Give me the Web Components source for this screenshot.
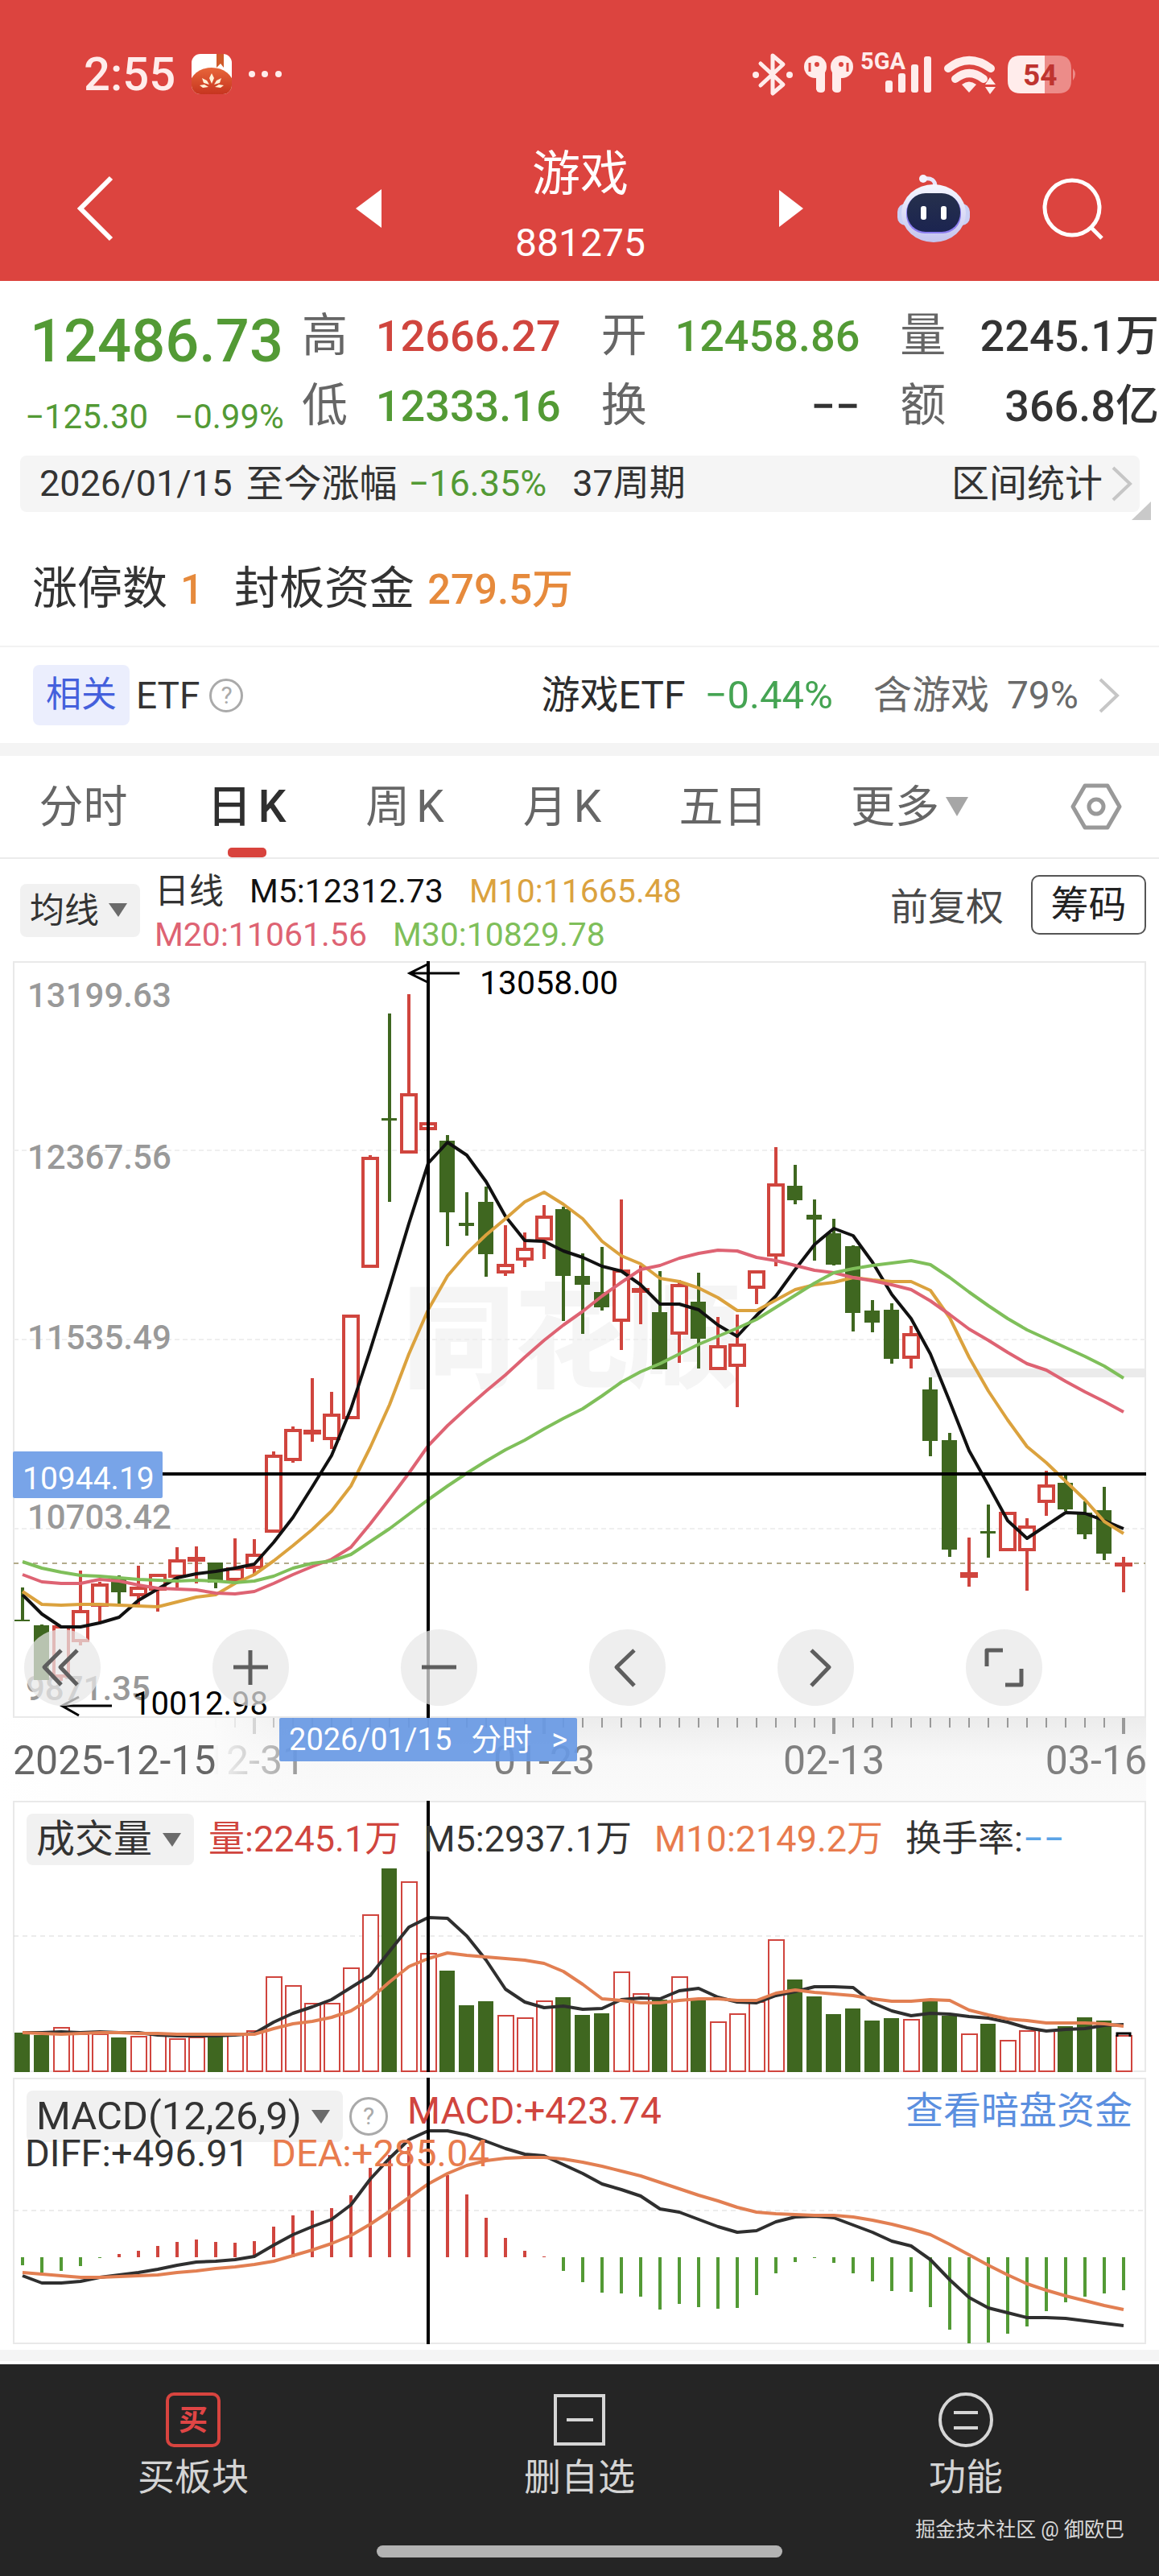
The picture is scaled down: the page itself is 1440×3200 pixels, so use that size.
<!DOCTYPE html>
<html lang="zh-CN">
<head>
<meta charset="utf-8">
<meta name="viewport" content="width=device-width, initial-scale=1">
<title>游戏 881275</title>
<style>
  body {
    margin: 0;
    background: #fff;
    color: #333;
    font-family: Roboto, "Noto Sans CJK SC", sans-serif;
    --up: #d0453e;
    --down: #539a35;
    --orange: #e68a3c;
  }
</style>
</head>
<body>
<status-bar time="2:55"></status-bar>
<stock-header name="游戏" code="881275"></stock-header>
<main>
  <quote-panel></quote-panel>
  <range-bar></range-bar>
  <limit-row></limit-row>
  <etf-row></etf-row>
  <period-tabs></period-tabs>
  <ma-bar></ma-bar>
  <kline-chart></kline-chart>
  <date-ruler></date-ruler>
  <volume-chart></volume-chart>
  <macd-chart></macd-chart>
</main>
<trade-nav>
  <trade-item label="买板块">
    <svg width="68" height="68" viewBox="0 0 68 68"><rect x="2" y="2" width="64" height="64" rx="8" fill="none" stroke="#d8443f" stroke-width="4"/><text x="34" y="47" text-anchor="middle" font-size="36" font-weight="700" fill="#e04545">买</text></svg>
  </trade-item>
  <trade-item label="删自选">
    <svg width="68" height="68" viewBox="0 0 68 68"><path d="M4 4h60v60H4zM18 34h33" fill="none" stroke="#d6d6d6" stroke-width="4"/></svg>
  </trade-item>
  <trade-item label="功能">
    <svg width="68" height="68" viewBox="0 0 68 68"><circle cx="34" cy="34" r="32" fill="none" stroke="#d6d6d6" stroke-width="4"/><path d="M19 25h30M19 44h30" stroke="#d6d6d6" stroke-width="4"/></svg>
  </trade-item>
</trade-nav>

<script>
const UP = '#d0453e';
const DOWN = '#3f6720';

class BaseElement extends HTMLElement {
  constructor() {
    super();
    this.attachShadow({ mode: 'open' });
  }

  connectedCallback() {
    this.shadowRoot.innerHTML = `
      <style>
        :host { display: block; }
        * { box-sizing: border-box; }
        button, select { font: inherit; color: inherit; background: none; border: 0; padding: 0; margin: 0; }
        a { color: inherit; text-decoration: none; }
        svg { display: block; flex: none; overflow: visible; }
      </style>
      ${this.render()}
    `;
  }
}

// Candles share one horizontal scale in all three charts
const xAt = i => 28 + i * 24;
const points = values => values.map((y, i) => `${xAt(i)},${y}`).join(' ');
const polyline = (values, color, width = 3) =>
  `<polyline points="${points(values)}" fill="none" stroke="${color}" stroke-width="${width}" stroke-linejoin="round"/>`;

class StatusBar extends BaseElement {
  render() {
    return `
      <style>
        :host { background: #dc443f; color: #ffeceb; }
        .bar { display: flex; align-items: center; height: 134px; padding: 50px 100px 0 104px; }
        time { font-size: 58px; font-weight: 500; line-height: 84px; margin-right: 20px; }
        .app { margin-right: 20px; }
        .right { margin-left: auto; }
      </style>
      <div class="bar">
        <time>${this.getAttribute('time')}</time>
        <svg class="app" width="50" height="50" viewBox="0 0 50 50">
          <defs><clipPath id="c"><rect width="50" height="50" rx="11"/></clipPath>
          <linearGradient id="g" x1="0" y1="0" x2="0" y2="1"><stop offset="0" stop-color="#e8663a"/><stop offset="1" stop-color="#bd2718"/></linearGradient></defs>
          <g clip-path="url(#c)">
            <rect width="50" height="50" fill="#fff"/>
            <path d="M31 0h9v17l-4-5-5 5z" fill="#cf5a2a"/>
            <ellipse cx="25" cy="38" rx="27" ry="21" fill="url(#g)"/>
            <path d="M25 37l-3-7 3-6 3 6zM22 38l-7-2-2-6 6 3zM28 38l7-2 2-6-6 3zM21 41l-7 1-4-3 6-1zM29 41l7 1 4-3-6-1z" fill="#fff2d8"/>
          </g>
        </svg>
        <svg width="44" height="12" viewBox="0 0 44 12" fill="#ffeceb"><circle cx="5" cy="6" r="4"/><circle cx="21" cy="6" r="4"/><circle cx="38" cy="6" r="4"/></svg>
        <svg class="right" width="406" height="60" viewBox="934 61 406 60" fill="#ffeceb">
          <path d="M945 78l28 26-13 11V68l13 11-28 26" fill="none" stroke="#ffeceb" stroke-width="5" stroke-linejoin="round" stroke-linecap="round"/>
          <circle cx="939" cy="92" r="4"/><circle cx="981" cy="92" r="4"/>
          <ellipse cx="1013" cy="82" rx="14" ry="14"/><ellipse cx="1046" cy="82" rx="14" ry="14"/>
          <path d="M1014 80h11v30q0 4-5 4t-6-4zM1034 80h11v30q0 4-5 4t-6-4z"/>
          <path d="M1006 88V77M1053 88V77" stroke="#dc443f" stroke-width="3"/><circle cx="1015" cy="79" r="3" fill="#dc443f"/><circle cx="1045" cy="79" r="3" fill="#dc443f"/>
          <text x="1069" y="85" font-size="29" font-weight="700">5GA</text>
          <rect x="1100" y="99" width="9" height="15" rx="3"/><rect x="1116" y="90" width="9" height="24" rx="3"/><rect x="1132" y="79" width="9" height="35" rx="3"/><rect x="1148" y="69" width="9" height="45" rx="3"/>
          <path d="M1178 84q26-20 53 0M1187 97q17-14 35 0" fill="none" stroke="#ffeceb" stroke-width="10" stroke-linecap="round"/>
          <path d="M1195 104q9-7 18 0l-9 10z"/>
          <path d="M1224 104l6-9 7 9zM1224 107l6 9 7-9z"/>
          <path d="M1298 68h17q16 0 16 16v15q0 16-16 16h-17z" fill="#ec8c89"/>
          <path d="M1333 84q6 7 0 15z" fill="#ec8c89"/>
          <path d="M1298 68h-30q-16 0-16 16v15q0 16 16 16h30z"/>
          <text x="1271" y="105" font-size="37" font-weight="700" fill="#bf3430">54</text>
        </svg>
      </div>
    `;
  }
}

class StockHeader extends BaseElement {
  render() {
    return `
      <style>
        :host { background: #dc443f; color: #fff; }
        header { display: grid; grid-template-columns: 1fr 556px 1fr; align-items: center; height: 215px; padding: 34px 68px 0; }
        .back { margin-left: 24px; }
        .switch { display: flex; align-items: center; justify-content: space-between; }
        h1 { margin: 0; font-weight: 400; text-align: center; }
        .name { display: block; font-size: 60px; line-height: 86px; }
        .code { display: block; font-size: 48px; line-height: 84px; }
        .tools { display: flex; align-items: center; justify-content: flex-end; gap: 86px; }
      </style>
      <header>
        <a class="back" href="#back" aria-label="返回"><svg width="52" height="84" viewBox="0 0 52 84"><path d="M46 4L8 42l38 38" fill="none" stroke="#fff" stroke-width="6"/></svg></a>
        <div class="switch">
          <button aria-label="上一只"><svg width="32" height="48" viewBox="0 0 32 48"><path d="M32 0v48L0 24z" fill="#fff"/></svg></button>
          <h1><span class="name">${this.getAttribute('name')}</span><span class="code">${this.getAttribute('code')}</span></h1>
          <button aria-label="下一只"><svg width="30" height="46" viewBox="0 0 30 46"><path d="M0 0v46l30-23z" fill="#fff"/></svg></button>
        </div>
        <div class="tools">
          <button aria-label="智能助手">
            <svg width="92" height="86" viewBox="0 0 92 86">
              <defs><linearGradient id="r" x1="0" y1="0" x2="0" y2="1"><stop offset="0" stop-color="#f6f7ff"/><stop offset="1" stop-color="#c3c3ee"/></linearGradient>
              <linearGradient id="s" x1="0" y1="0" x2="0" y2="1"><stop offset="0" stop-color="#26304c"/><stop offset="1" stop-color="#1b2450"/></linearGradient></defs>
              <path d="M34 6q14-2 14 10" fill="none" stroke="#e9e6fa" stroke-width="5"/><circle cx="33" cy="6" r="5" fill="#f3f2ff"/>
              <rect x="1" y="37" width="90" height="27" rx="10" fill="#c9d0f5"/>
              <ellipse cx="46" cy="49" rx="40" ry="36" fill="url(#r)"/>
              <rect x="12" y="25" width="68" height="49" rx="23" fill="#8b7df0"/>
              <rect x="13" y="24" width="66" height="48" rx="23" fill="url(#s)"/>
              <rect x="30" y="40" width="7" height="17" rx="3" fill="#fff"/><rect x="55" y="40" width="7" height="17" rx="3" fill="#fff"/>
            </svg>
          </button>
          <button aria-label="搜索"><svg width="80" height="80" viewBox="0 0 80 80" fill="none" stroke="#fff" stroke-width="5"><circle cx="40" cy="39" r="34"/><path d="M64 64l13 13"/></svg></button>
        </div>
      </header>
    `;
  }
}

class QuotePanel extends BaseElement {
  render() {
    const cells = [
      ['高', '12666.27', 'up'], ['开', '12458.86', 'down'], ['量', '2245.1万', ''],
      ['低', '12333.16', 'down'], ['换', '−−', ''], ['额', '366.8亿', ''],
    ];
    return `
      <style>
        section { display: grid; grid-template-columns: 375px 1fr; height: 217px; padding-top: 21px; }
        .last { padding-left: 37px; color: var(--down); font-weight: 500; }
        .price { font-size: 74px; line-height: 108px; }
        .change { display: flex; gap: 32px; margin-left: -6px; font-size: 42px; line-height: 80px; font-weight: 400; }
        dl { display: grid; grid-template-columns: repeat(3, 1fr); column-gap: 50px; grid-auto-rows: 87px; margin: 0; }
        dl div { display: flex; justify-content: space-between; align-items: baseline; white-space: nowrap; }
        dt { font-size: 57px; color: #666; }
        dd { margin: 0; font-size: 54px; font-weight: 500; }
        .up { color: var(--up); }
        .down { color: var(--down); }
      </style>
      <section>
        <div class="last">
          <div class="price">12486.73</div>
          <div class="change"><span>−125.30</span><span>−0.99%</span></div>
        </div>
        <dl>${cells.map(([k, v, c]) => `<div><dt>${k}</dt><dd class="${c}">${v}</dd></div>`).join('')}</dl>
      </section>
    `;
  }
}

class RangeBar extends BaseElement {
  render() {
    return `
      <style>
        :host { position: relative; }
        .bar { display: flex; align-items: center; gap: 20px; height: 70px; margin: 0 24px 0 25px; padding: 0 8px 0 24px; background: #f5f5f5; border-radius: 8px; font-size: 45px; line-height: 70px; white-space: nowrap; }
        .text { font-size: 47px; margin: 0 -6px 0 -3px; }
        .pct { color: var(--down); margin-right: 12px; }
        a { display: flex; align-items: center; gap: 10px; margin-left: auto; font-size: 47px; }
        .corner { position: absolute; right: 10px; bottom: -10px; }
      </style>
      <div class="bar">
        <span>2026/01/15</span><span class="text">至今涨幅</span><span class="pct">−16.35%</span><span>37周期</span>
        <a href="#stats">区间统计<svg width="28" height="46" viewBox="0 0 28 46"><path d="M3 3l21 20L3 43" fill="none" stroke="#c6c6c6" stroke-width="4"/></svg></a>
      </div>
      <svg class="corner" width="24" height="23" viewBox="0 0 24 23"><path d="M24 0v23H0z" fill="#c9c9c9"/></svg>
    `;
  }
}

class LimitRow extends BaseElement {
  render() {
    return `
      <style>
        p { height: 168px; margin: 0; padding: 24px 40px 0; font-size: 56px; line-height: 142px; border-bottom: 2px solid #f2f2f2; }
        b { font-size: 51px; font-weight: 500; color: var(--orange); margin: 0 38px 0 16px; }
      </style>
      <p>涨停数<b>1</b>封板资金<b>279.5万</b></p>
    `;
  }
}

class HelpButton extends BaseElement {
  render() {
    return `
      <style>
        :host { display: inline-block; }
        button { display: grid; place-items: center; width: 1em; height: 1em; border: 3px solid #aaa; border-radius: 50%; color: #aaa; }
        span { font-size: 30px; line-height: 30px; }
      </style>
      <button aria-label="说明"><span>?</span></button>
    `;
  }
}

class EtfRow extends BaseElement {
  render() {
    return `
      <style>
        section { display: flex; align-items: center; height: 119px; padding: 0 48px 0 41px; font-size: 48px; line-height: 70px; white-space: nowrap; }
        .tag { padding: 0 16px; font-size: 44px; line-height: 75px; background: #ebeefd; color: #4460dc; border-radius: 8px; }
        .etf { margin: 0 12px 0 8px; font-size: 46px; }
        help-button { font-size: 42px; }
        a { display: flex; align-items: center; margin-left: auto; }
        .name { color: #2c2c2c; }
        .pct { font-size: 49px; color: #45a453; margin: 0 50px 0 24px; }
        .hold { display: flex; gap: 22px; color: #6a6a6a; margin-right: 24px; }
        .gap { height: 16px; background: #f4f4f4; }
      </style>
      <section>
        <span class="tag">相关</span><span class="etf">ETF</span><help-button></help-button>
        <a href="#etf"><span class="name">游戏ETF</span><span class="pct">−0.44%</span><span class="hold"><span>含游戏</span><span>79%</span></span>
          <svg width="28" height="46" viewBox="0 0 28 46"><path d="M3 3l21 20L3 43" fill="none" stroke="#c6c6c6" stroke-width="4"/></svg></a>
      </section>
      <div class="gap"></div>
    `;
  }
}

class PeriodTabs extends BaseElement {
  render() {
    const tabs = ['分时', '日K', '周K', '月K', '五日'];
    return `
      <style>
        nav { display: grid; grid-template-columns: 207fr 199fr 194fr 197fr 203fr 260fr 180fr; height: 128px; border-bottom: 2px solid #ebebeb; font-size: 55px; line-height: 80px; color: #666; }
        button { position: relative; display: flex; align-items: center; justify-content: center; gap: 8px; }
        .active { color: #2f2f2f; font-weight: 500; }
        .active::after { content: ""; position: absolute; bottom: 0; left: 50%; width: 48px; height: 12px; margin-left: -24px; border-radius: 5px; background: #d8433d; }
        .set { justify-content: flex-end; padding-right: 46px; }
      </style>
      <nav>
        ${tabs.map(t => `<button class="${t === '日K' ? 'active' : ''}">${t.replace('K', '<span>K</span>')}</button>`).join('')}
        <button aria-haspopup="true">更多<svg width="28" height="24" viewBox="0 0 28 24"><path d="M0 0h28L14 24z" fill="#a6a6a6"/></svg></button>
        <button class="set" aria-label="设置"><svg width="64" height="60" viewBox="0 0 64 60" fill="none" stroke="#999" stroke-width="5" stroke-linejoin="round"><path d="M18 4h28l15 26-15 26H18L3 30z"/><circle cx="32" cy="30" r="9"/></svg></button>
      </nav>
    `;
  }
}

// Grey pill with a native drop-down inside
class PillSelect extends BaseElement {
  render() {
    return `
      <style>
        :host { display: inline-block; }
        label { display: flex; align-items: center; gap: 12px; padding: 0 16px 0 12px; height: 100%; background: #f1f1f1; border-radius: 8px; }
        select { appearance: none; line-height: 64px; white-space: nowrap; }
      </style>
      <label><select aria-label="指标"><option>${this.getAttribute('value')}</option></select>
        <svg width="23" height="17" viewBox="0 0 23 17"><path d="M0 0h23L12 17z" fill="#6b6b6b"/></svg></label>
    `;
  }
}

class MaBar extends BaseElement {
  render() {
    return `
      <style>
        section { display: flex; align-items: center; height: 127px; padding: 0 16px 0 25px; white-space: nowrap; }
        pill-select { font-size: 43px; height: 66px; }
        .values { margin: 7px 0 0 18px; font-size: 41px; line-height: 54px; }
        .values div { display: flex; gap: 32px; }
        .label { font-size: 43px; }
        .adjust { margin: -8px 0 0 auto; font-size: 47px; line-height: 70px; color: #4a4a4a; }
        .chips { margin: -14px 0 0 34px; width: 143px; height: 74px; border: 2px solid #555; border-radius: 10px; font-size: 47px; line-height: 64px; color: #222; }
      </style>
      <section>
        <pill-select value="均线"></pill-select>
        <div class="values">
          <div><span class="label">日线</span><span style="color:#111">M5:12312.73</span><span style="color:#dba23e">M10:11665.48</span></div>
          <div><span style="color:#de6373">M20:11061.56</span><span style="color:#7fbf5a">M30:10829.78</span></div>
        </div>
        <button class="adjust">前复权</button>
        <button class="chips">筹码</button>
      </section>
    `;
  }
}

// [up, high, bodyTop, bodyBottom, low]
const CANDLES = [
  [0,1972,2012,2014,2014],[0,2018,2019,2087,2087],[1,2019,2019,2084,2088],[1,1951,2000,2040,2044],[1,1965,1967,1996,2015],
  [0,1957,1961,1978,1993],[1,1945,1971,1983,1994],[1,1955,1955,1976,2002],[1,1922,1937,1960,1972],[1,1921,1934,1940,1967],
  [0,1941,1941,1966,1973],[1,1911,1947,1964,1964],[1,1912,1930,1949,1955],[1,1803,1807,1904,1904],[1,1772,1775,1815,1817],
  [1,1712,1776,1782,1791],[1,1729,1756,1789,1800],[1,1633,1633,1763,1763],[1,1435,1437,1575,1575],[0,1259,1389,1392,1493],
  [1,1235,1358,1433,1433],[1,1394,1394,1404,1404],[0,1410,1417,1506,1548],[0,1481,1519,1523,1535],[0,1474,1493,1558,1586],
  [1,1522,1570,1582,1585],[1,1531,1550,1566,1574],[1,1497,1510,1541,1564],[0,1499,1502,1585,1641],[0,1557,1585,1596,1657],
  [0,1549,1605,1624,1628],[1,1490,1577,1642,1677],[1,1572,1600,1606,1645],[0,1579,1630,1701,1701],[1,1590,1595,1658,1693],
  [0,1581,1617,1663,1700],[1,1636,1671,1702,1702],[1,1633,1669,1698,1748],[1,1578,1578,1601,1620],[1,1425,1470,1561,1573],
  [0,1447,1473,1491,1496],[0,1490,1509,1515,1566],[0,1514,1532,1571,1572],[0,1547,1548,1631,1654],[0,1615,1628,1643,1655],
  [0,1619,1627,1688,1694],[1,1647,1656,1688,1700],[0,1711,1726,1790,1809],[0,1780,1789,1925,1934],[1,1910,1953,1960,1971],
  [0,1869,1902,1905,1935],[1,1878,1878,1927,1927],[1,1886,1895,1927,1976],[1,1827,1844,1867,1883],[0,1833,1842,1875,1877],
  [0,1865,1879,1906,1912],[0,1847,1876,1930,1938],[1,1934,1941,1944,1978],
];
const MA5 = [1981,2005,2021,2021,2016,2009,1988,1974,1960,1955,1952,1948,1943,1916,1885,1847,1808,1750,1677,1600,1520,1445,1419,1435,1468,1511,1541,1542,1554,1562,1573,1579,1596,1620,1620,1627,1646,1660,1634,1610,1577,1546,1526,1535,1568,1608,1638,1682,1741,1802,1845,1889,1911,1895,1879,1880,1889,1899];
const MA10 = [1977,1993,1994,1993,1993,1994,1995,1996,1990,1984,1981,1967,1956,1939,1920,1900,1877,1846,1798,1745,1682,1627,1585,1557,1534,1514,1493,1481,1496,1514,1542,1560,1570,1588,1592,1600,1612,1628,1628,1615,1602,1596,1593,1587,1590,1592,1592,1603,1637,1686,1728,1764,1797,1817,1840,1863,1890,1905];
const MA20 = [1956,1965,1967,1967,1962,1964,1969,1973,1974,1975,1979,1980,1977,1967,1956,1946,1937,1922,1893,1862,1830,1796,1771,1749,1728,1708,1686,1665,1646,1629,1610,1593,1577,1572,1563,1557,1553,1554,1562,1566,1572,1578,1581,1587,1591,1596,1602,1616,1633,1651,1665,1680,1694,1702,1716,1729,1741,1754];
const MA30 = [1940,1948,1953,1957,1958,1960,1962,1963,1964,1963,1964,1966,1964,1958,1948,1942,1939,1931,1915,1899,1881,1863,1846,1830,1815,1801,1789,1775,1762,1750,1734,1717,1704,1694,1682,1670,1660,1650,1639,1624,1609,1594,1581,1576,1572,1569,1566,1571,1587,1605,1622,1638,1652,1663,1674,1685,1697,1712];

class KlineChart extends BaseElement {
  candle([up, high, top, bottom, low], i) {
    const x = xAt(i);
    const color = up ? UP : DOWN;
    const wick = `<path d="M${x} ${high}V${top}M${x} ${bottom}V${low}" stroke="${color}" stroke-width="4"/>`;
    const body = up
      ? `<rect x="${x - 9}" y="${top + 2}" width="18" height="${Math.max(bottom - top - 4, 1)}" fill="${bottom - top < 8 ? color : '#fff'}" stroke="${color}" stroke-width="4"/>`
      : `<rect x="${x - 10}" y="${top}" width="19" height="${bottom - top}" fill="${color}"/>`;
    return wick + body;
  }

  render() {
    const icons = [
      ['最早', 'M46 26L25 47l21 22M66 26L45 47l21 22'], ['放大', 'M26 47h43M47 26v43'], ['缩小', 'M26 47h43'],
      ['左移', 'M56 26L34 47l22 23'], ['右移', 'M42 26l22 21-22 23'], ['全屏', 'M46 26H26v20M69 49v20H49'],
    ];
    return `
      <style>
        :host { position: relative; }
        .chart { width: 100%; height: auto; }
        .tools { position: absolute; left: 30px; right: 145px; bottom: 15px; display: flex; justify-content: space-between; }
        .tools button { border-radius: 50%; background: rgba(232,232,232,.72); }
      </style>
      <svg class="chart" viewBox="0 1194 1440 940" font-size="42">
        <text x="500" y="1712" font-size="140" font-weight="900" fill="#f5f5f5">同花顺</text>
        <rect x="1156" y="1700" width="268" height="11" fill="#ebebeb"/>
        <rect x="17" y="1195" width="1406" height="938" fill="none" stroke="#e9e9e9" stroke-width="2"/>
        <path d="M17 1429H1423M17 1664H1423M17 1899H1423" stroke="#efefef" stroke-width="2" stroke-dasharray="6 4"/>
        <path d="M17 1942H1423" stroke="#b3ab8c" stroke-width="2" stroke-dasharray="6 6"/>
        <g fill="#999" font-weight="500"><text x="34" y="1251">13199.63</text><text x="34" y="1452">12367.56</text><text x="34" y="1676">11535.49</text><text x="34" y="1899">10703.42</text><text x="32" y="2112">9871.35</text></g>
        ${CANDLES.map((c, i) => this.candle(c, i)).join('')}
        ${polyline(MA5, '#111', 4)}${polyline(MA10, '#dba23e', 4)}${polyline(MA20, '#de6373', 4)}${polyline(MA30, '#7fbf5a', 4)}
        <path d="M532 1194V2134M202 1831H1424" stroke="#000" stroke-width="4"/>
        <path d="M571 1209H510M531 1198L509 1209l22 11M139 2119H78M98 2108L77 2119l21 12" fill="none" stroke="#000" stroke-width="3"/>
        <g fill="#000" font-size="41"><text x="596" y="1235">13058.00</text><text x="165" y="2130" font-size="40">10012.98</text></g>
        <rect x="16" y="1803" width="186" height="58" rx="2" fill="#78a4e8"/>
        <text x="28" y="1850" font-size="39" fill="#fff">10944.19</text>
      </svg>
      <div class="tools">
        ${icons.map(([label, d]) => `<button aria-label="${label}"><svg width="95" height="95" viewBox="0 0 95 95"><path d="${d}" fill="none" stroke="#5e5e5e" stroke-width="5" stroke-linejoin="round"/></svg></button>`).join('')}
      </div>
    `;
  }
}

class DateRuler extends BaseElement {
  render() {
    const ticks = CANDLES.map((_, i) => i % 15 === 12
      ? `<path d="M${xAt(i)} 0V20" stroke-width="4"/>`
      : `<path d="M${xAt(i)} 0V12" stroke-width="2"/>`).join('');
    return `
      <style>
        :host { position: relative; }
        .ruler { width: 100%; height: auto; }
        a { position: absolute; left: 24.1%; top: 0; display: flex; gap: 24px; padding: 0 12px; font-size: 38px; line-height: 54px; color: #fff; background: rgba(104,153,228,.92); border-radius: 2px; white-space: nowrap; }
      </style>
      <svg class="ruler" viewBox="0 0 1440 103" font-size="50">
        <defs>
          <linearGradient id="bg" x1="0" y1="0" x2="0" y2="1"><stop offset="0" stop-color="#ececec"/><stop offset=".5" stop-color="#f8f8f8"/><stop offset="1" stop-color="#fafafa"/></linearGradient>
          <linearGradient id="fade"><stop offset="0" stop-color="#fff"/><stop offset=".66" stop-color="#fbfbfb"/><stop offset="1" stop-color="#fafafa" stop-opacity="0"/></linearGradient>
        </defs>
        <rect x="17" width="1407" height="103" fill="url(#bg)"/>
        <g stroke="#999">${ticks}</g>
        <g fill="#808080" text-anchor="middle"><text x="316" y="70">12-31</text><text x="676" y="70">01-23</text><text x="1036" y="70">02-13</text><text x="1425" y="70" text-anchor="end">03-16</text></g>
        <rect width="400" height="103" fill="url(#fade)"/>
        <text x="16" y="70" fill="#666">2025-12-15</text>
      </svg>
      <a href="#minute"><span>2026/01/15</span><span>分时</span><span>&gt;</span></a>
    `;
  }
}

const VOLUMES = [2525,2528,2519,2527,2527,2531,2530,2528,2533,2531,2529,2528,2523,2456,2467,2489,2489,2445,2379,2321,2338,2427,2448,2491,2486,2504,2507,2486,2481,2503,2501,2450,2477,2484,2456,2485,2512,2502,2487,2410,2459,2480,2502,2495,2510,2507,2509,2485,2504,2527,2514,2535,2523,2523,2517,2506,2510,2529];
const VOL5 = [2525,2525,2524,2525,2524,2525,2525,2528,2529,2529,2529,2528,2526,2512,2501,2493,2484,2469,2454,2424,2394,2382,2383,2405,2435,2471,2487,2494,2492,2496,2495,2484,2482,2483,2473,2470,2481,2487,2488,2479,2474,2468,2468,2469,2488,2498,2504,2501,2502,2505,2507,2512,2519,2523,2521,2520,2516,2515];
const VOL10 = [2525,2526,2527,2526,2525,2525,2526,2526,2527,2527,2527,2527,2527,2520,2514,2511,2506,2498,2483,2462,2443,2433,2426,2429,2431,2433,2435,2439,2449,2465,2483,2485,2488,2488,2485,2483,2483,2485,2485,2476,2472,2475,2477,2479,2483,2486,2486,2484,2485,2497,2503,2508,2510,2513,2513,2513,2514,2517];

class VolumeChart extends BaseElement {
  render() {
    const bars = VOLUMES.map((y, i) => {
      const x = xAt(i);
      return CANDLES[i][0]
        ? `<rect x="${x - 9}" y="${y}" width="19" height="${2573 - y}" fill="#fff" stroke="${UP}" stroke-width="2"/>`
        : `<rect x="${x - 10}" y="${y}" width="19" height="${2574 - y}" fill="${DOWN}"/>`;
    }).join('');
    return `
      <style>
        :host { position: relative; }
        .chart { width: 100%; height: auto; }
        .legend { position: absolute; left: 33px; top: 16px; display: flex; align-items: center; gap: 28px; font-size: 45px; line-height: 64px; white-space: nowrap; }
        pill-select { font-size: 48px; height: 64px; margin-right: -10px; }
        .none { color: #5ba3e6; }
      </style>
      <svg class="chart" viewBox="0 2237 1440 344">
        <rect x="17" y="2238" width="1406" height="335" fill="none" stroke="#e9e9e9" stroke-width="2"/>
        <path d="M17 2405H1423" stroke="#d8d8d8" stroke-width="1" stroke-dasharray="6 5"/>
        ${bars}
        <path d="M1388 2530v-4h16v4" fill="none" stroke="#000" stroke-width="3"/>
        ${polyline(VOL5, '#2f2f2f', 4)}${polyline(VOL10, '#e27f52', 4)}
        <path d="M532 2237V2574" stroke="#000" stroke-width="4"/>
      </svg>
      <div class="legend">
        <pill-select value="成交量"></pill-select>
        <span style="color:#d0453e">量:2245.1万</span><span>M5:2937.1万</span><span style="color:#e87b4d">M10:2149.2万</span><span>换手率:<span class="none">−−</span></span>
      </div>
    `;
  }
}

const MACD = [2814,2823,2821,2815,2805,2800,2796,2790,2785,2782,2785,2786,2784,2766,2752,2746,2743,2727,2693,2677,2667,2663,2702,2726,2755,2780,2796,2803,2821,2835,2848,2849,2853,2869,2862,2866,2868,2867,2851,2824,2810,2805,2811,2824,2834,2846,2847,2866,2894,2911,2910,2899,2890,2871,2860,2853,2849,2845];
const DIFF = [2827,2836,2836,2834,2829,2826,2823,2819,2814,2810,2809,2807,2803,2789,2776,2766,2757,2739,2707,2681,2658,2647,2647,2652,2660,2669,2676,2678,2689,2700,2713,2720,2728,2744,2748,2757,2766,2773,2771,2760,2754,2753,2755,2764,2773,2784,2790,2807,2832,2854,2867,2873,2879,2879,2880,2883,2886,2889];
const DEA = [2823,2825,2827,2829,2829,2828,2827,2826,2823,2821,2818,2816,2813,2809,2802,2795,2787,2777,2763,2747,2730,2713,2700,2690,2684,2681,2680,2680,2682,2686,2691,2697,2703,2711,2719,2727,2734,2742,2748,2750,2751,2752,2752,2754,2758,2763,2769,2776,2788,2801,2814,2826,2837,2845,2852,2858,2864,2869];

class MacdChart extends BaseElement {
  render() {
    const bars = MACD.map((y, i) => `<path d="M${xAt(i)} 2804V${y}" stroke="${y < 2804 ? UP : '#539a35'}"/>`).join('');
    return `
      <style>
        :host { position: relative; border-bottom: 4px solid #fff; }
        .chart { width: 100%; height: auto; }
        .gap { height: 14px; background: #f4f4f4; }
        .legend { position: absolute; left: 33px; right: 33px; top: 16px; font-size: 47px; white-space: nowrap; }
        .row { display: flex; align-items: center; line-height: 52px; }
        .row + .row { gap: 28px; margin-top: -12px; margin-left: -2px; }
        pill-select { font-size: 49px; height: 64px; }
        help-button { font-size: 48px; margin: 0 24px 0 8px; }
        .macd { color: #d0453e; margin-top: -14px; }
        a { margin: -14px 0 0 auto; color: #5b8fdf; }
      </style>
      <svg class="chart" viewBox="0 2581 1440 338">
        <rect x="17" y="2582" width="1406" height="329" fill="none" stroke="#e9e9e9" stroke-width="2"/>
        <path d="M17 2746H1423" stroke="#d8d8d8" stroke-width="1" stroke-dasharray="6 5"/>
        <g stroke-width="4">${bars}</g>
        ${polyline(DIFF, '#2f2f2f', 4)}${polyline(DEA, '#e27f52', 4)}
        <path d="M532 2581V2912" stroke="#000" stroke-width="4"/>
      </svg>
      <div class="gap"></div>
      <div class="legend">
        <div class="row"><pill-select value="MACD(12,26,9)"></pill-select><help-button></help-button><span class="macd">MACD:+423.74</span><a href="#funds">查看暗盘资金</a></div>
        <div class="row"><span>DIFF:+496.91</span><span style="color:#e87b4d">DEA:+285.04</span></div>
      </div>
    `;
  }
}

class TradeItem extends BaseElement {
  render() {
    return `
      <style>
        button { display: flex; flex-direction: column; align-items: center; width: 100%; font-size: 46px; line-height: 66px; color: #d4d4d4; }
        ::slotted(svg) { display: block; margin-bottom: 4px; }
      </style>
      <button><slot></slot>${this.getAttribute('label')}</button>
    `;
  }
}

class TradeNav extends BaseElement {
  render() {
    return `
      <style>
        :host { position: relative; background: #252525; }
        nav { display: grid; grid-template-columns: repeat(3, 1fr); padding: 35px 0 52px; }
        .home { width: 35%; height: 15px; margin: 0 auto; border-radius: 8px; background: #b3b3b3; }
        .foot { height: 38px; }
        .author { position: absolute; right: 43px; bottom: 38px; font-size: 25px; line-height: 38px; color: #d8d8d8; }
      </style>
      <nav><slot></slot></nav>
      <div class="foot"><div class="home"></div></div>
      <span class="author">掘金技术社区 @ 御欧巴</span>
    `;
  }
}

customElements.define('status-bar', StatusBar);
customElements.define('stock-header', StockHeader);
customElements.define('quote-panel', QuotePanel);
customElements.define('range-bar', RangeBar);
customElements.define('limit-row', LimitRow);
customElements.define('help-button', HelpButton);
customElements.define('pill-select', PillSelect);
customElements.define('etf-row', EtfRow);
customElements.define('period-tabs', PeriodTabs);
customElements.define('ma-bar', MaBar);
customElements.define('kline-chart', KlineChart);
customElements.define('date-ruler', DateRuler);
customElements.define('volume-chart', VolumeChart);
customElements.define('macd-chart', MacdChart);
customElements.define('trade-item', TradeItem);
customElements.define('trade-nav', TradeNav);
</script>
</body>
</html>
